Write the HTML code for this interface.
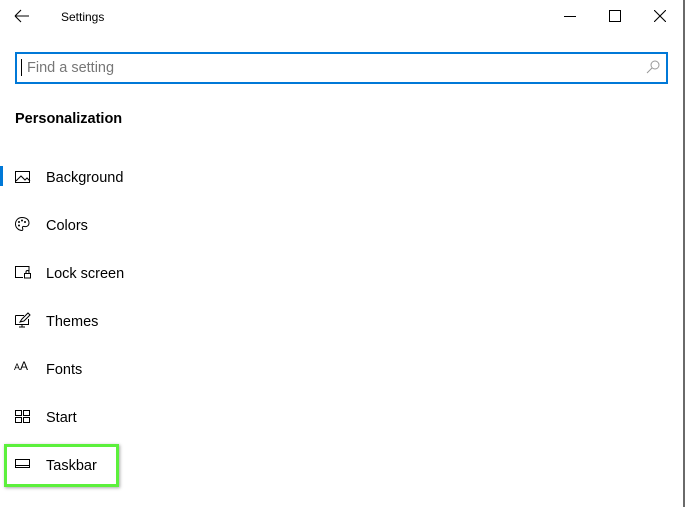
<!DOCTYPE html>
<html><head><style>
body{margin:0;width:685px;height:507px;background:#fff;font-family:"Liberation Sans",sans-serif;position:relative;overflow:hidden;color:#000}
.a{position:absolute}
.t{position:absolute;left:46px;font-size:14.5px;line-height:18px}
.i{position:absolute;left:14px}
</style></head><body>
<div class="a" style="right:0;top:0;width:2px;height:507px;background:#6a6a6a"></div>
<svg class="a" style="left:14px;top:9px" width="16" height="14"><path d="M1 7H15M1 7L7 1M1 7L7 13" stroke="#000" stroke-width="1.1" fill="none"/></svg>
<div class="a" style="left:61px;top:10px;font-size:12px">Settings</div>
<div class="a" style="left:564px;top:16px;width:12px;height:1px;background:#000"></div>
<div class="a" style="left:609px;top:10px;width:10px;height:10px;border:1px solid #000"></div>
<svg class="a" style="left:654px;top:10px" width="12" height="12"><path d="M0 0L12 12M12 0L0 12" stroke="#000" stroke-width="1.1"/></svg>
<div class="a" style="left:15px;top:52px;width:649px;height:28px;border:2px solid #0078d7"></div>
<div class="a" style="left:21px;top:59px;width:1px;height:17px;background:#000"></div>
<div class="a" style="left:27px;top:60px;font-size:14.5px;color:#777">Find a setting</div>
<svg class="a" style="left:646px;top:60px" width="14" height="14"><circle cx="9" cy="5" r="4" stroke="#999" fill="none"/><path d="M6 8L1 13" stroke="#999"/></svg>
<div class="a" style="left:15px;top:111px;font-size:14.5px;font-weight:bold">Personalization</div>
<div class="a" style="left:0;top:166px;width:3px;height:20px;background:#0078d7"></div>

<svg class="i" style="top:170px" width="18" height="14"><rect x="1.5" y="1.5" width="14" height="11" fill="none" stroke="#000"/><path d="M2 11L7 6L11 10L13 8L16 11" fill="none" stroke="#000"/></svg>
<div class="t" style="top:169px">Background</div>
<svg class="i" style="top:216px" width="18" height="16"><path d="M8 1.5C4 1.5 1.5 4.5 1.5 8C1.5 12 5 14.5 8 14.5C9 14.5 9 13 8.5 12C8 11 9 10 10.5 10.5C13 11 15 9.5 15 7C15 3.5 12 1.5 8 1.5Z" fill="none" stroke="#000"/><circle cx="5" cy="6" r="1"/><circle cx="8" cy="4.5" r="1"/><circle cx="11" cy="6" r="1"/><circle cx="5" cy="9.5" r="1"/></svg>
<div class="t" style="top:217px">Colors</div>
<svg class="i" style="top:265px" width="20" height="14"><path d="M9 12.5H1.5V1.5H15V6" fill="none" stroke="#000"/><rect x="10.5" y="8.5" width="6" height="4.5" fill="none" stroke="#000"/><path d="M12 8.5V7a1.5 1.5 0 0 1 3 0V8.5" fill="none" stroke="#000"/></svg>
<div class="t" style="top:265px">Lock screen</div>
<svg class="i" style="top:312px" width="18" height="16"><path d="M1.5 3.5H10M14.5 7V12.5H1.5V3.5M8 12.5V15M5 15H11" fill="none" stroke="#000"/><path d="M6 10L8 7L14 1L16 3L10 9Z" fill="none" stroke="#000"/></svg>
<div class="t" style="top:313px">Themes</div>
<div class="i" style="top:361px;font-size:9px;line-height:10px">A<span style="font-size:12px">A</span></div>
<div class="t" style="top:361px">Fonts</div>
<svg class="i" style="top:410px" width="18" height="13"><rect x="1.5" y="0.5" width="6" height="5" fill="none" stroke="#000"/><rect x="9.5" y="0.5" width="6" height="5" fill="none" stroke="#000"/><rect x="1.5" y="7.5" width="6" height="5" fill="none" stroke="#000"/><rect x="9.5" y="7.5" width="6" height="5" fill="none" stroke="#000"/></svg>
<div class="t" style="top:409px">Start</div>
<div class="a" style="left:4px;top:444px;width:109px;height:37px;border:3px solid #5cf03c;box-shadow:1px 1px 3px rgba(0,0,0,.35)"></div>
<svg class="i" style="top:459px" width="18" height="10"><rect x="1.5" y="0.5" width="14" height="8" fill="none" stroke="#000"/><path d="M1.5 6.5H15.5" stroke="#000"/></svg>
<div class="t" style="top:457px">Taskbar</div>
</body></html>
